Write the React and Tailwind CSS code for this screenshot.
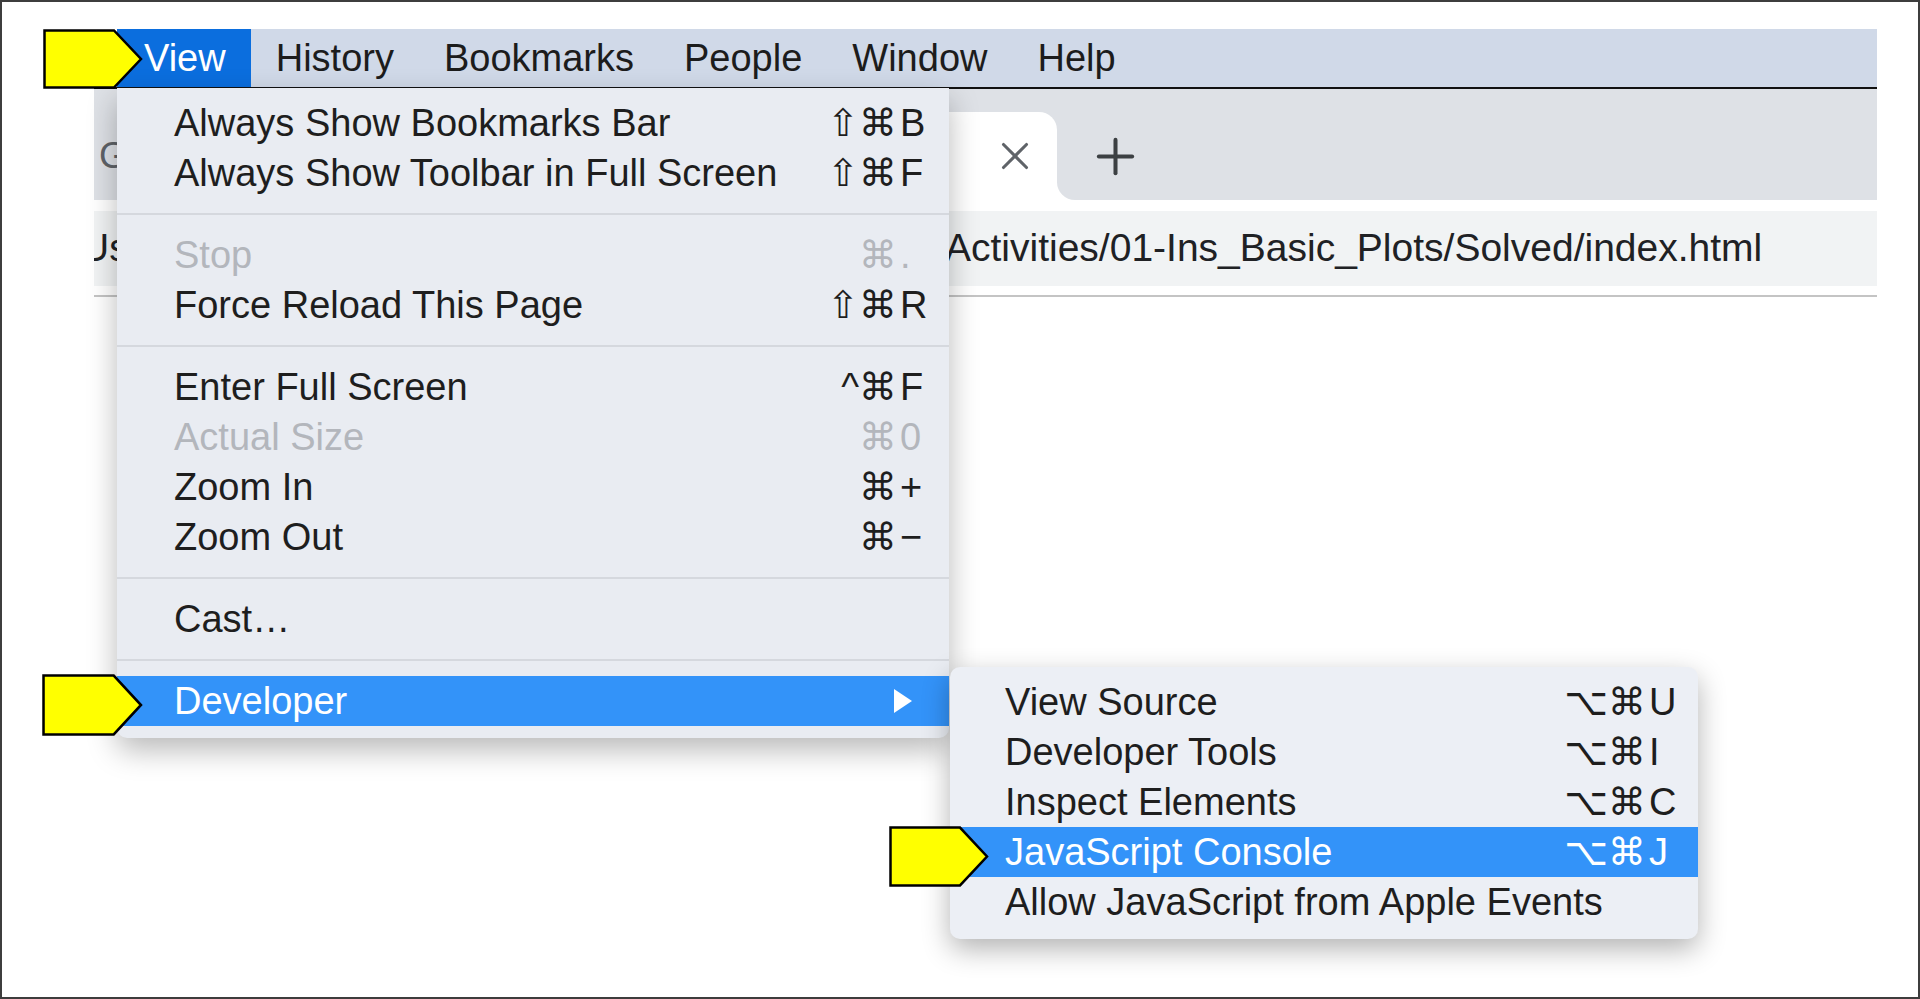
import { X, Plus } from "lucide-react";

const FONT = { fontFamily: '"Liberation Sans", "DejaVu Sans", sans-serif' };

const viewItems = [
  { label: "Always Show Bookmarks Bar", mod: "⇧⌘", key: "B" },
  { label: "Always Show Toolbar in Full Screen", mod: "⇧⌘", key: "F" },
  "sep",
  { label: "Stop", mod: "⌘", key: ".", disabled: true },
  { label: "Force Reload This Page", mod: "⇧⌘", key: "R" },
  "sep",
  { label: "Enter Full Screen", mod: "^⌘", key: "F" },
  { label: "Actual Size", mod: "⌘", key: "0", disabled: true },
  { label: "Zoom In", mod: "⌘", key: "+" },
  { label: "Zoom Out", mod: "⌘", key: "−" },
  "sep",
  { label: "Cast…" },
  "sep",
  { label: "Developer", submenu: true, active: true },
];

const devItems = [
  { label: "View Source", mod: "⌥⌘", key: "U" },
  { label: "Developer Tools", mod: "⌥⌘", key: "I" },
  { label: "Inspect Elements", mod: "⌥⌘", key: "C" },
  { label: "JavaScript Console", mod: "⌥⌘", key: "J", active: true },
  { label: "Allow JavaScript from Apple Events" },
];

const menuBar = ["History", "Bookmarks", "People", "Window", "Help"];

// yellow pointer drawn over the screenshot
const Pointer = ({ className }) => (
  <svg className={className} viewBox="0 0 100 60" preserveAspectRatio="none">
    <polygon
      points="1.5,1.5 71,1.5 98,30 71,58.5 1.5,58.5"
      fill="#ffff00"
      stroke="#000"
      strokeWidth="2.5"
    />
  </svg>
);

const MenuRow = ({ item, pl }) => {
  const color = item.active
    ? "text-white"
    : item.disabled
    ? "text-[#b3b6bc]"
    : "text-[#1e1e1e]";
  return (
    <div
      className={`flex items-center h-[50px] pr-[21px] ${color} ${
        item.active ? "bg-[#3393f9]" : ""
      }`}
      style={{ paddingLeft: pl }}
    >
      <span className="flex-1 whitespace-nowrap">{item.label}</span>
      {item.mod && <span className="text-right">{item.mod}</span>}
      {item.key && <span className="w-[31px] pl-[3px]">{item.key}</span>}
      {item.submenu && (
        <svg width="18" height="24" viewBox="0 0 18 24" className="mr-[16px]">
          <polygon points="0,0 18,12 0,24" fill="#fff" />
        </svg>
      )}
    </div>
  );
};

export default function App() {
  return (
    <div
      className="relative w-[1920px] h-[999px] overflow-hidden bg-white border-2 border-[#3d3d3d]"
      style={FONT}
    >
      <div className="pt-[27px]">
        {/* menu bar */}
        <div className="ml-[115px] w-[1760px] h-[58px] bg-[#d0d9e8] flex items-center text-[38px] text-[#1c1c1c]">
          <div className="h-full flex items-center bg-[#0b6ede] text-white pl-[27px] pr-[25px]">
            View
          </div>
          {menuBar.map((m) => (
            <div key={m} className="px-[25px]">
              {m}
            </div>
          ))}
        </div>

        {/* browser window behind the menu */}
        <div className="ml-[92px] w-[1783px] border-t-2 border-[#111]">
          <div className="flex h-[111px] bg-white">
            <div className="w-[606px] bg-[#dee1e6] rounded-br-[18px] pt-[23px] flex items-center text-[37px] text-[#5f6368] pl-[5px]">
              G
            </div>
            <div className="bg-[#dee1e6] pt-[23px]">
              <div className="w-[357px] h-[88px] bg-white rounded-t-[18px] flex items-center justify-end pr-[19px]">
                <X size={46} strokeWidth={1.6} color="#5f6368" />
              </div>
            </div>
            <div className="flex-1 bg-[#dee1e6] rounded-bl-[18px] pt-[23px] flex items-center pl-[30px]">
              <Plus size={57} strokeWidth={1.7} color="#3c4043" />
            </div>
          </div>
          <div className="h-[11px]" />
          <div className="h-[75px] bg-[#f1f3f4] flex items-center overflow-hidden text-[39px] text-[#202124] whitespace-nowrap">
            <div className="w-[851px] overflow-hidden shrink-0">
              <span className="block -ml-[13px]">Users/</span>
            </div>
            <span>Activities/01-Ins_Basic_Plots/Solved/index.html</span>
          </div>
          <div className="h-[9px]" />
          <div className="h-[2px] bg-[#c4c4c4]" />
        </div>
      </div>

      {/* View menu */}
      <div className="absolute left-[115px] top-[86px] w-[832px] bg-[#e9ecf2] rounded-b-[10px] pt-[10px] pb-[12px] text-[38px] shadow-[0_12px_30px_rgba(0,0,0,0.28)]">
        {viewItems.map((item, i) =>
          item === "sep" ? (
            <div key={i} className="h-[32px] flex items-center">
              <div className="w-full h-[2px] bg-[#d5d8de]" />
            </div>
          ) : (
            <MenuRow key={i} item={item} pl={57} />
          )
        )}
      </div>

      {/* Developer submenu */}
      <div className="absolute left-[948px] top-[665px] w-[748px] bg-[#eceff5] rounded-[10px] pt-[10px] pb-[12px] text-[38px] shadow-[0_10px_28px_rgba(0,0,0,0.3)]">
        {devItems.map((item, i) => (
          <MenuRow key={i} item={item} pl={55} />
        ))}
      </div>

      <Pointer className="absolute left-[41px] top-[27px] w-[100px] h-[60px]" />
      <Pointer className="absolute left-[40px] top-[672px] w-[101px] h-[62px]" />
      <Pointer className="absolute left-[887px] top-[824px] w-[100px] h-[61px]" />
    </div>
  );
}
